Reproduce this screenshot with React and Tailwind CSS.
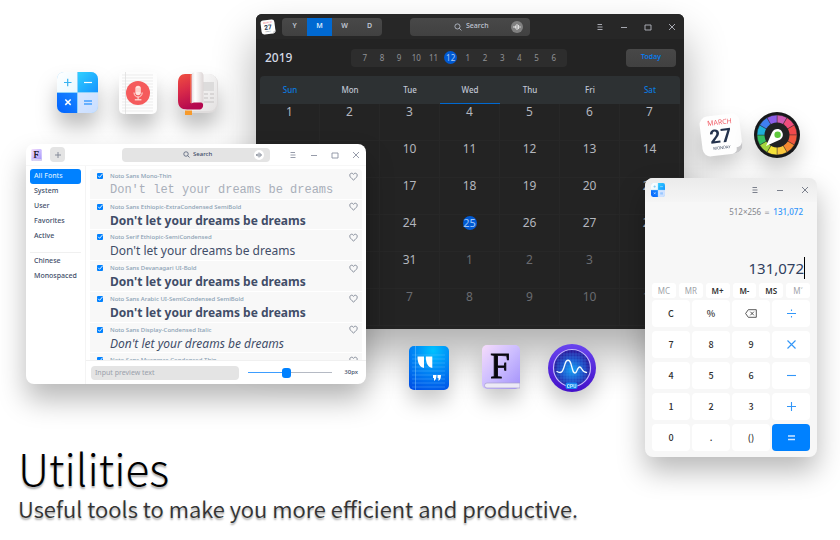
import React from "react";

const MONTHS = [7, 8, 9, 10, 11, 12, 1, 2, 3, 4, 5, 6];
const WEEKDAYS = ["Sun", "Mon", "Tue", "Wed", "Thu", "Fri", "Sat"];
const WEEKS = [0, 1, 2, 3, 4, 5].map((w) =>
  [1, 2, 3, 4, 5, 6, 7].map((d) => {
    const n = w * 7 + d;
    return n > 31 ? { day: n - 31, outside: true } : { day: n, outside: false };
  })
);

const FONTS = [
  { name: "Noto Sans Mono-Thin", style: "font-['Liberation_Mono',monospace] text-[12px] text-[#a9afba]" },
  { name: "Noto Sans Ethiopic-ExtraCondensed SemiBold", style: "font-bold text-[12px] text-[#414d68]" },
  { name: "Noto Serif Ethiopic-SemiCondensed", style: "text-[12px] text-[#414d68]" },
  { name: "Noto Sans Devanagari UI-Bold", style: "font-bold text-[12px] text-[#414d68]" },
  { name: "Noto Sans Arabic UI-SemiCondensed SemiBold", style: "font-bold text-[12px] text-[#414d68]" },
  { name: "Noto Sans Display-Condensed Italic", style: "italic text-[12px] text-[#414d68]" },
  { name: "Noto Sans Myanmar-Condensed Thin", style: "text-[12px] text-[#414d68]" },
];

function CalculatorIcon({ className, id }) {
  return (
    <svg viewBox="0 0 41 41" className={className} aria-hidden="true">
      <defs>
        <clipPath id={id + "c"}><rect width="41" height="41" rx="7" /></clipPath>
        <linearGradient id={id + "a"} x1="0" y1="0" x2="1" y2="1"><stop stopColor="#2fd0ff" /><stop offset="1" stopColor="#1593ff" /></linearGradient>
        <linearGradient id={id + "b"} x1="1" y1="0" x2="0" y2="1"><stop stopColor="#1a86ff" /><stop offset="1" stopColor="#0062ff" /></linearGradient>
        <linearGradient id={id + "d"} x1="0" y1="0" x2="1" y2="1"><stop stopColor="#ffffff" /><stop offset="1" stopColor="#e8f8ff" /></linearGradient>
        <linearGradient id={id + "e"} x1="0" y1="0" x2="1" y2="1"><stop stopColor="#d9e6ff" /><stop offset="1" stopColor="#c8deff" /></linearGradient>
      </defs>
      <g clipPath={`url(#${id}c)`}>
        <rect width="41" height="41" fill="#8fd2fb" />
        <rect width="20" height="20" fill={`url(#${id}d)`} />
        <rect x="21" width="20" height="20" fill={`url(#${id}a)`} />
        <rect y="21" width="20" height="20" fill={`url(#${id}b)`} />
        <rect x="21" y="21" width="20" height="20" fill={`url(#${id}e)`} />
      </g>
      <path d="M7 10.500h7.500M10.700 6.700v7.500" stroke="#35b2f2" strokeWidth="1.200" />
      <path d="M27 10.500h8" stroke="#fff" strokeWidth="1.200" />
      <path d="M8.300 27.500l5.400 5.400M13.700 27.500l-5.400 5.400" stroke="#fff" strokeWidth="1.500" />
      <path d="M27 29h8M27 32h8" stroke="#66b0ff" strokeWidth="1.800" />
    </svg>
  );
}

function RecorderIcon({ className }) {
  return (
    <svg viewBox="0 0 38 42" className={className} aria-hidden="true">
      <rect width="38" height="42" rx="5" fill="#fdfdfd" />
      {[3, 6, 9, 12, 15, 18, 21, 24, 27, 30, 33, 36, 39].map((y) => (
        <path key={y} d={`M3 ${y}h31`} stroke="#e4e4e4" strokeWidth="0.700" />
      ))}
      <path d="M6.500 0v42" stroke="#dedede" strokeWidth="0.800" />
      <circle cx="19" cy="21" r="12" fill="#f55b5c" />
      <rect x="16.400" y="13.800" width="5.400" height="9.500" rx="2.700" fill="#ffe4df" />
      <path d="M15 20.500c0 6 8.200 6 8.200 0M19.100 25v2.500" stroke="#ffe4df" strokeWidth="1" fill="none" />
      <path d="M15.800 27.800h6.600" stroke="#ffe4df" strokeWidth="1.200" />
      <path d="M16.500 17h5.200M16.500 19h5.200" stroke="#f8a7a2" strokeWidth="0.600" />
    </svg>
  );
}

function ReaderIcon({ className }) {
  return (
    <svg viewBox="0 0 40 43" className={className} aria-hidden="true">
      <defs>
        <linearGradient id="rdRed" x1="0" y1="0" x2="0.300" y2="1"><stop stopColor="#f0503f" /><stop offset="0.500" stopColor="#d82a49" /><stop offset="1" stopColor="#b5094f" /></linearGradient>
        <linearGradient id="rdPage" x1="0" x2="1"><stop stopColor="#e5dfdf" /><stop offset="0.300" stopColor="#ffffff" /><stop offset="1" stopColor="#ddd6d6" /></linearGradient>
        <linearGradient id="rdBack" x1="0" y1="0" x2="1" y2="1"><stop stopColor="#ffffff" /><stop offset="1" stopColor="#e5e3e3" /></linearGradient>
      </defs>
      <rect x="1" y="2" width="39" height="39" rx="9" fill="#dfdcdc" />
      <rect x="3" y="2" width="36" height="37" rx="8" fill="url(#rdBack)" />
      <rect x="25" y="10" width="11" height="9" fill="#dddcdc" />
      <path d="M26 22h4M32 22h4M26 26h4M32 26h4M26 30h10" stroke="#d2d0d0" strokeWidth="1.600" />
      <path d="M7 2h8v28h8c3 0 3 7-1 7.500H9c-6 0-9-3-9-9V11c0-6 3-9 7-9z" fill="url(#rdRed)" />
      <path d="M12.700 2v29" stroke="#ff7a4b" strokeWidth="1" fill="none" opacity=".8" />
      <path d="M13.500 31.500V3c0-2 2-3 4-3h5c2 0 3 2 3 4v29c-.5-2-1.500-2.500-3.500-2.500h-5c-1.500 0-2.500.3-3.500 1z" fill="url(#rdPage)" />
      <path d="M7 38.500h7V43H7z" fill="#f79a2b" />
    </svg>
  );
}

function QuoteIcon({ className }) {
  return (
    <svg viewBox="0 0 40 44" className={className} aria-hidden="true">
      <defs>
        <radialGradient id="qtBg" cx="0.600" cy="0.100" r="1"><stop stopColor="#00c2ff" /><stop offset="0.500" stopColor="#0085f5" /><stop offset="1" stopColor="#0050e6" /></radialGradient>
      </defs>
      <rect width="40" height="44" rx="5" fill="url(#qtBg)" />
      {[9, 13, 17, 21, 25, 29, 33, 37, 41].map((y) => (
        <path key={y} d={`M3 ${y}h33`} stroke="#7cc8ff" strokeWidth="0.600" opacity=".5" />
      ))}
      <path d="M6.500 0v44" stroke="#7cc8ff" strokeWidth="0.700" opacity=".7" />
      <path d="M8.500 10.500H15v11.500c-3.800-.8-6.500-4-6.500-11.500zM16.800 10.500h6.500v11.500c-3.800-.8-6.500-4-6.500-11.500z" fill="#fff" />
      <path d="M24 29h3.500c0 3-.7 5-2.500 6v-3h-1zM28.500 29H32c0 3-.7 5-2.500 6v-3h-1z" fill="#fff" />
    </svg>
  );
}

function FontIcon({ className, id }) {
  return (
    <svg viewBox="0 0 38 44" className={className} aria-hidden="true">
      <defs>
        <linearGradient id={id} x1="0" y1="0" x2="1" y2="1"><stop stopColor="#f6dcfb" /><stop offset="0.500" stopColor="#cbbcff" /><stop offset="1" stopColor="#a290fa" /></linearGradient>
      </defs>
      <rect width="38" height="44" rx="5" fill={`url(#${id})`} />
      <path d="M5 38h33v5H5a2.500 2.500 0 0 1 0-5z" fill="#ece9f6" stroke="#a9a0cf" strokeWidth="0.700" />
      <text x="18" y="32.500" textAnchor="middle" fontFamily="'Liberation Serif', serif" fontSize="35" fill="#08070d" stroke="#08070d" strokeWidth="0.900">F</text>
    </svg>
  );
}

function CpuIcon({ className }) {
  const lines = [10, 13, 16, 19, 22, 25, 28, 31, 34, 37];
  return (
    <svg viewBox="0 0 48 48" className={className} aria-hidden="true">
      <defs>
        <radialGradient id="cpuBg" cx="0.500" cy="0.550" r="0.500"><stop stopColor="#10a5f5" /><stop offset="0.600" stopColor="#1c4cc4" /><stop offset="1" stopColor="#2b1a9b" /></radialGradient>
        <linearGradient id="cpuRim" x1="0" y1="0" x2="0" y2="1"><stop stopColor="#6844ef" /><stop offset="1" stopColor="#4310c9" /></linearGradient>
        <clipPath id="cpuClip"><circle cx="24" cy="24" r="18" /></clipPath>
      </defs>
      <circle cx="24" cy="24" r="24" fill="url(#cpuRim)" />
      <circle cx="24" cy="24" r="18.500" fill="url(#cpuBg)" stroke="#c3b6fb" strokeWidth="1.200" />
      <g clipPath="url(#cpuClip)" stroke="#49a5ff" strokeWidth="0.400" opacity=".6">
        {lines.map((n) => <path key={n} d={`M${n} 5v38M5 ${n}h38`} />)}
      </g>
      <path d="M9 27.500c5 3 6-1 8-7.500 1.500-5 4.500-5 6 0 2 7 2 9 4 9 2.500 0 2-6 4.700-6 2.500 0 1.800 5.500 6.800 5.500" stroke="#f3fbff" strokeWidth="1.300" fill="none" strokeLinecap="round" />
      <rect x="17.500" y="38.500" width="12" height="6.500" rx="2" fill="#1684ef" />
      <text x="23.700" y="43.700" textAnchor="middle" fontFamily="Roboto, sans-serif" fontWeight="bold" fontSize="5" fill="#c5efff">CPU</text>
    </svg>
  );
}

function DateIcon({ className }) {
  return (
    <svg viewBox="0 0 46 46" className={className} aria-hidden="true">
      <g transform="rotate(-7 23 23)">
        <rect x="3" y="3" width="40" height="40" rx="8" fill="#fefefe" />
        <path d="M43 32v3a8 8 0 0 1-8 8h-3c5-1 5-3 5-6 3 0 5-1 6-5z" fill="#c9c9cb" />
        <text x="23" y="12.500" textAnchor="middle" fontFamily="'Open Sans', sans-serif" fontSize="7" fill="#f0505a">MARCH</text>
        <text x="22.500" y="30.500" textAnchor="middle" fontFamily="Roboto, sans-serif" fontWeight="bold" fontSize="19" fill="#24324c">27</text>
        <text x="22.500" y="37" textAnchor="middle" fontFamily="'Open Sans', sans-serif" fontSize="4" fill="#24324c">MONDAY</text>
      </g>
    </svg>
  );
}

const WHEEL = ["#cf5bb4", "#ef4d7c", "#f0494c", "#f0573f", "#f58a32", "#fbc83c", "#f6e23a", "#a5d63f", "#35c060", "#1fb0d9", "#3f7ff0", "#8a5ee8"];

function ColorWheelIcon({ className }) {
  const point = (deg, r) => {
    const a = ((deg - 90) * Math.PI) / 180;
    return `${(23 + r * Math.cos(a)).toFixed(2)} ${(23 + r * Math.sin(a)).toFixed(2)}`;
  };
  return (
    <svg viewBox="0 0 46 46" className={className} aria-hidden="true">
      <circle cx="23" cy="23" r="23" fill="#17181a" />
      {WHEEL.map((c, i) => (
        <path key={c} d={`M23 23L${point(i * 30, 20)}A20 20 0 0 1 ${point(i * 30 + 30, 20)}Z`} fill={c} stroke="#2c2c2c" strokeWidth="0.400" />
      ))}
      <circle cx="23" cy="23" r="12.500" fill="#212224" />
      <path d="M12 34L18 20.500c2-4 7-4.500 9.500-1.500 2.300 3 1.600 7-1.700 8.800z" fill="#fff" />
      <circle cx="23.600" cy="22.800" r="3.200" fill="#5fc93c" />
    </svg>
  );
}

function SearchGlyph({ className }) {
  return (
    <svg viewBox="0 0 10 10" className={className} fill="none" stroke="currentColor" strokeWidth="1" aria-hidden="true">
      <circle cx="4.300" cy="4.300" r="3.200" />
      <path d="M6.700 6.700L9.300 9.300" />
    </svg>
  );
}

function VoiceGlyph({ className }) {
  return (
    <svg viewBox="0 0 12 12" className={className} fill="none" stroke="currentColor" strokeWidth="1.100" aria-hidden="true">
      <path d="M3 5v2M4.500 4.500v3M6 3v6M7.500 4v4M9 5.300v1.400" />
    </svg>
  );
}

function Glyph({ kind }) {
  const d = {
    menu: "M2.500 2.500h4.500M2.500 5h5M2.500 7.500h5",
    minimize: "M2 5.500h6",
    maximize: "M2 3h6v5H2z",
    close: "M2 2l6 6M8 2l-6 6",
  }[kind];
  return (
    <svg viewBox="0 0 10 10" className="size-[10px]" fill="none" stroke="currentColor" strokeWidth="0.900" aria-hidden="true">
      <path d={d} />
    </svg>
  );
}

function WindowControls({ kinds, className, buttonClass }) {
  return (
    <div className={"ml-auto flex " + className}>
      {kinds.map((k) => (
        <button key={k} aria-label={k} className={"flex items-center justify-center " + buttonClass}>
          <Glyph kind={k} />
        </button>
      ))}
    </div>
  );
}

function CalendarWindow() {
  return (
    <section aria-label="Calendar" className="absolute left-[256px] top-[14px] w-[428px] rounded-[6px] bg-[#232323] text-[#c0c6d4] shadow-[0_24px_44px_rgba(0,0,0,0.32)]">
      <header className="flex h-[25px] items-center rounded-t-[6px] bg-[#272727] pl-1">
        <DateIcon className="size-4" />
        <div className="ml-[6px] flex h-[18px] w-[100px] overflow-hidden rounded-[4px] bg-linear-to-b from-[#484848] to-[#414141] text-[7px] font-semibold">
          {["Y", "M", "W", "D"].map((v) => (
            <button key={v} className={"flex-1 " + (v === "M" ? "bg-[#0069d2] text-[#d8e8fa]" : "")}>{v}</button>
          ))}
        </div>
        <label className="ml-7 flex h-[18px] w-[120px] items-center rounded-[4px] bg-linear-to-b from-[#484848] to-[#414141] pl-11 pr-[7px]">
          <SearchGlyph className="size-2 shrink-0" />
          <input aria-label="Search events" placeholder="Search" className="ml-1 w-0 flex-1 bg-transparent text-[7px] font-medium outline-none placeholder:text-[#c0c6d4]" />
          <VoiceGlyph className="size-3 rounded-full bg-[#808080] text-[#dddddd]" />
        </label>
        <WindowControls kinds={["menu", "minimize", "maximize", "close"]} className="text-[#b4b7bf]" buttonClass="h-[25px] w-6" />
      </header>
      <div className="flex h-[37px] items-center justify-between pl-[9px] pr-2">
        <h2 className="text-[12px] font-medium text-[#d4d9e6]">2019</h2>
        <div className="flex h-[18px] w-[216px] items-center rounded-[4px] bg-[#2d2d2d] px-[5px] text-[8px] text-[#909296]">
          {MONTHS.map((m) => (
            <button key={m} className="flex flex-1 justify-center">
              <span className={"flex size-[13px] items-center justify-center rounded-full " + (m === 12 ? "bg-[#0059d2] text-[#a8c9f5]" : "")}>{m}</span>
            </button>
          ))}
        </div>
        <button className="h-[18px] w-[50px] rounded-[4px] bg-linear-to-b from-[#484848] to-[#414141] text-[7px] font-medium text-[#0081ff]">Today</button>
      </div>
      <div className="px-1 pb-[3px]">
        <table className="w-full table-fixed border-separate border-spacing-0">
          <thead>
            <tr>
              {WEEKDAYS.map((d) => (
                <th
                  key={d}
                  scope="col"
                  className={
                    "h-7 border-b bg-[#2d3133] p-0 text-[8px] font-medium first:rounded-tl-[4px] last:rounded-tr-[4px] " +
                    (d === "Wed" ? "border-[#0069d2] " : "border-[#2d3133] ") +
                    (d === "Sun" || d === "Sat" ? "text-[#0b7be0]" : "")
                  }
                >
                  {d}
                </th>
              ))}
            </tr>
          </thead>
          <tbody>
            {WEEKS.map((week, i) => (
              <tr key={i}>
                {week.map(({ day, outside }) => (
                  <td key={day} className={"h-[37px] border-b border-r border-[#272727] p-0 text-center align-top text-[12px] leading-4 " + (outside ? "text-[#696b70]" : "text-[#b3b6be]")}>
                    <span className={"inline-block " + (day === 25 ? "mt-[1px] size-[14px] rounded-full bg-[#0059d2] text-[11px] leading-[14px] text-[#9cc4f8]" : "h-4")}>{day}</span>
                  </td>
                ))}
              </tr>
            ))}
          </tbody>
        </table>
      </div>
    </section>
  );
}

function FontRow({ font }) {
  return (
    <li className="flex border-b border-white pl-[7px] pr-1 pt-[1px]">
      <div className="grid h-3 w-[13px] shrink-0 place-items-center justify-start">
        <input type="checkbox" defaultChecked aria-label={font.name} className="col-start-1 row-start-1 size-[6px] appearance-none rounded-[1px] bg-[#0081ff]" />
        <svg viewBox="0 0 6 6" className="pointer-events-none col-start-1 row-start-1 size-[6px]" aria-hidden="true">
          <path d="M1.200 2.800L2.600 4.300L5.600 .8" stroke="#fff" strokeWidth="0.900" fill="none" />
        </svg>
      </div>
      <div className="min-w-0 flex-1">
        <p className="truncate text-[6px] leading-3 font-medium text-[#8aa1b4]">{font.name}</p>
        <p className={"whitespace-nowrap leading-4 " + font.style}>Don't let your dreams be dreams</p>
      </div>
      <button aria-label="Favorite" className="flex h-3 items-center text-[#7c8392]">
        <svg viewBox="0 0 9 9" className="size-[9px]" fill="none" stroke="currentColor" strokeWidth="0.900" aria-hidden="true">
          <path d="M4.500 8C2 6 .8 4.800.8 3.200c0-2.200 2.700-2.700 3.700-.8 1-1.900 3.700-1.400 3.700.8C8.200 4.800 7 6 4.500 8z" />
        </svg>
      </button>
    </li>
  );
}

function SidebarItem({ children, active }) {
  return (
    <button className={"flex h-[15px] w-full items-center rounded-[3px] pl-1 text-[7px] font-medium " + (active ? "bg-[#0081ff] text-[#d8ecff]" : "text-[#414d68]")}>
      {children}
    </button>
  );
}

function FontWindow() {
  return (
    <section aria-label="Font Manager" className="absolute left-[26px] top-[144px] flex h-[240px] w-[340px] flex-col rounded-[8px] bg-white text-[#414d68] shadow-[0_16px_28px_rgba(0,0,0,0.28)]">
      <header className="flex h-[21px] shrink-0 items-center pl-[5px]">
        <FontIcon id="fontSmall" className="h-3 w-[11px]" />
        <button aria-label="Add font" className="ml-2 flex size-[15px] items-center justify-center rounded-[4px] bg-[#e4e4e4]">
          <svg viewBox="0 0 6 6" className="size-[6px]" stroke="#7e8593" strokeWidth="0.900" aria-hidden="true"><path d="M0 3h6M3 0v6" /></svg>
        </button>
        <label className="ml-[57px] flex h-[14px] w-[148px] items-center rounded-[4px] bg-[#e4e4e4] pl-[61px] pr-[6px]">
          <SearchGlyph className="size-[7px] shrink-0" />
          <input aria-label="Search fonts" placeholder="Search" className="ml-[3px] w-0 flex-1 bg-transparent text-[6px] font-medium outline-none placeholder:text-[#414d68]" />
          <VoiceGlyph className="size-[10px] rounded-full bg-white text-[#7e8593]" />
        </label>
        <WindowControls kinds={["menu", "minimize", "maximize", "close"]} className="text-[#8b91a0]" buttonClass="h-[21px] w-[21px]" />
      </header>
      <div className="flex min-h-0 flex-1 border-t border-[#f7f7f7]">
        <nav className="w-[60px] shrink-0 border-r border-[#f4f4f4] px-1 pt-[3px]">
          <SidebarItem active>All Fonts</SidebarItem>
          {["System", "User", "Favorites", "Active"].map((t) => <SidebarItem key={t}>{t}</SidebarItem>)}
          <hr className="mb-[1px] mt-2 border-[#f0f0f0]" />
          {["Chinese", "Monospaced"].map((t) => <SidebarItem key={t}>{t}</SidebarItem>)}
        </nav>
        <div className="flex min-w-0 flex-1 flex-col">
          <div className="min-h-0 flex-1 overflow-hidden px-1 pt-[3px]">
            <ul className="grid h-[215px] grid-rows-7 rounded-[4px] bg-[#f8f8f8]">
              {FONTS.map((f) => <FontRow key={f.name} font={f} />)}
            </ul>
          </div>
          <footer className="flex h-6 shrink-0 items-center border-t border-[#f0f0f0] pl-[5px] pr-2">
            <input aria-label="Preview text" placeholder="Input preview text" className="h-[14px] w-[148px] rounded-[4px] bg-[#e4e4e4] px-1 text-[7px] outline-none placeholder:text-[#9aa0ab]" />
            <input
              type="range"
              aria-label="Font size"
              min="0"
              max="100"
              defaultValue="45"
              className="ml-[9px] h-[11px] w-[84px] appearance-none bg-[linear-gradient(90deg,#3d9dff_44%,#b5bac4_44%)] bg-size-[100%_1px] bg-center bg-no-repeat [&::-webkit-slider-thumb]:h-[10px] [&::-webkit-slider-thumb]:w-[9px] [&::-webkit-slider-thumb]:appearance-none [&::-webkit-slider-thumb]:rounded-[3px] [&::-webkit-slider-thumb]:bg-[#0081ff]"
            />
            <output className="ml-auto text-[6px] font-medium">30px</output>
          </footer>
        </div>
      </div>
    </section>
  );
}

function OperatorGlyph({ kind }) {
  const d = {
    divide: "M1 5.500h9M5.500 1.500v1.500M5.500 8v1.500",
    multiply: "M1.500 1.500l8 8M9.500 1.500l-8 8",
    minus: "M1 5.500h9",
    plus: "M1 5.500h9M5.500 1v9",
    equals: "M2 4h7M2 7.500h7",
  }[kind];
  return (
    <svg viewBox="0 0 11 11" className="size-[11px]" fill="none" stroke={kind === "equals" ? "#cfe6ff" : "#3296f8"} strokeWidth={kind === "equals" ? 1.6 : 1.1} aria-hidden="true">
      <path d={d} />
    </svg>
  );
}

const KEYS = ["C", "%", "backspace", "divide", "7", "8", "9", "multiply", "4", "5", "6", "minus", "1", "2", "3", "plus", "0", ".", "()", "equals"];
const OPERATORS = ["divide", "multiply", "minus", "plus", "equals"];

function CalcKey({ value }) {
  const op = OPERATORS.includes(value);
  return (
    <button aria-label={value} className={"flex items-center justify-center rounded-[4px] text-[#303030] " + (value === "equals" ? "bg-[#0081ff]" : "bg-white")}>
      {op ? (
        <OperatorGlyph kind={value} />
      ) : value === "backspace" ? (
        <svg viewBox="0 0 12 9" className="h-[9px] w-3" fill="none" stroke="currentColor" strokeWidth="0.800" aria-hidden="true">
          <path d="M3.300.7h8v7.600h-8L.6 4.500zM5.300 2.700l3.600 3.600M8.900 2.700L5.300 6.300" />
        </svg>
      ) : (
        value
      )}
    </button>
  );
}

function CalculatorWindow() {
  return (
    <section aria-label="Calculator" className="absolute left-[645px] top-[178px] w-[172px] rounded-[8px] bg-[#f7f7f7] shadow-[0_14px_28px_rgba(0,0,0,0.28)]">
      <header className="flex h-6 items-center rounded-t-[8px] bg-linear-to-b from-[#ebebeb] to-[#f5f5f5] pl-[6px]">
        <CalculatorIcon id="calcSmall" className="size-[14px]" />
        <WindowControls kinds={["menu", "minimize", "close"]} className="text-[#6d7380]" buttonClass="h-6 w-[25px]" />
      </header>
      <p className="mt-1 pr-[14px] text-right text-[8px] leading-[11px] text-[#84868c]">
        512×256 ＝ <span className="font-medium text-[#2d94fb]">131,072</span>
      </p>
      <p className="mt-10 flex justify-end pr-3">
        <span className="border-r border-black text-[15px] leading-[22px] text-[#303f60]">131,072</span>
      </p>
      <div className="mt-1 grid h-[15px] grid-cols-6 gap-[3px] px-[7px] text-[8px]">
        {["MC", "MR", "M+", "M-", "MS", "M˅"].map((m, i) => (
          <button key={m} className={"rounded-[3px] bg-white " + (i > 1 && i < 5 ? "font-semibold text-[#303030]" : "text-[#a0a3a8]")}>{m}</button>
        ))}
      </div>
      <div className="mt-[2px] grid h-[151px] grid-cols-4 grid-rows-5 gap-x-[2px] gap-y-1 px-[7px] pb-0 font-['Noto_Sans_CJK_SC',sans-serif] text-[9px] font-medium">
        {KEYS.map((k) => <CalcKey key={k} value={k} />)}
      </div>
      <div className="h-[6px]" />
    </section>
  );
}

export default function App() {
  return (
    <main className="relative flex min-h-screen w-full flex-col justify-end overflow-hidden bg-white font-['Noto_Sans',sans-serif]">
      <CalculatorIcon id="calcBig" className="absolute left-[57px] top-[72px] size-[41px] drop-shadow-[0_14px_10px_rgba(0,0,0,0.25)]" />
      <RecorderIcon className="absolute left-[119px] top-[72px] h-[42px] w-[38px] drop-shadow-[0_14px_10px_rgba(0,0,0,0.25)]" />
      <ReaderIcon className="absolute left-[178px] top-[72px] h-[43px] w-[40px] drop-shadow-[0_14px_10px_rgba(0,0,0,0.25)]" />
      <CalendarWindow />
      <DateIcon className="absolute left-[698px] top-[112px] size-[46px] drop-shadow-[0_12px_10px_rgba(0,0,0,0.2)]" />
      <ColorWheelIcon className="absolute left-[754px] top-[112px] size-[46px] drop-shadow-[0_12px_10px_rgba(0,0,0,0.2)]" />
      <FontWindow />
      <CalculatorWindow />
      <QuoteIcon className="absolute left-[409px] top-[346px] h-[44px] w-[40px] drop-shadow-[0_12px_10px_rgba(0,0,0,0.2)]" />
      <FontIcon id="fontBig" className="absolute left-[482px] top-[345px] h-[44px] w-[38px] drop-shadow-[0_12px_10px_rgba(0,0,0,0.2)]" />
      <CpuIcon className="absolute left-[548px] top-[344px] size-[48px] drop-shadow-[0_12px_10px_rgba(0,0,0,0.2)]" />
      <div className="px-[18px] pb-4 font-['Noto_Sans_CJK_SC',sans-serif]">
        <h1 className="text-[44px] leading-[50px] font-light text-black [text-shadow:0_2px_2px_rgba(0,0,0,0.35)]">Utilities</h1>
        <p className="text-[22px] leading-8 font-[350] text-[#333] [text-shadow:0_2px_2px_rgba(0,0,0,0.35)]">Useful tools to make you more efficient and productive.</p>
      </div>
    </main>
  );
}
